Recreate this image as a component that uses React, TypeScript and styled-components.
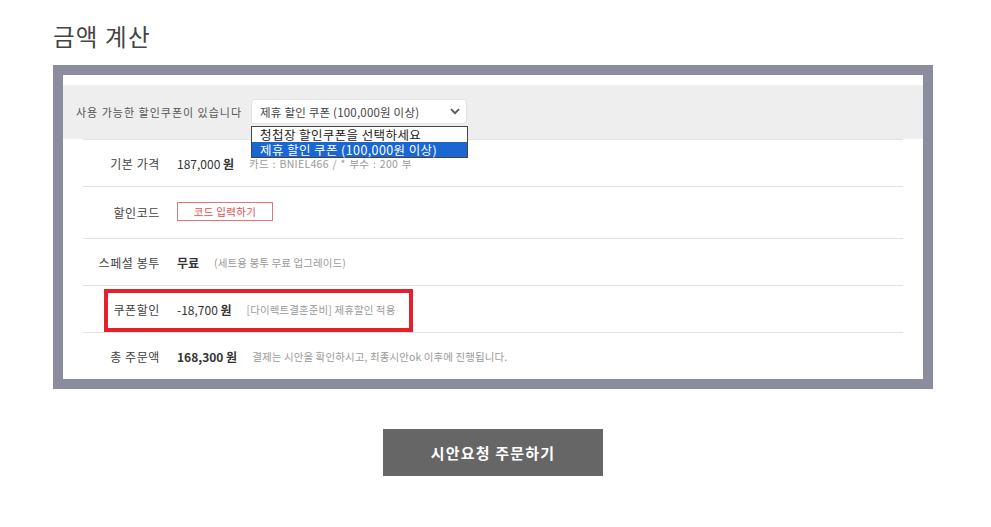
import React from "react";
import styled, { createGlobalStyle } from "styled-components";

const GlobalStyle = createGlobalStyle`
  body {
    margin: 0;
    background: #fff;
    font-family: "Noto Sans CJK KR", "Noto Sans", sans-serif;
    color: #333;
  }
`;

const Page = styled.div`
  width: 991px;
  padding-top: 21px;
`;

const Title = styled.h2`
  margin: 0 0 13px 53px;
  font-size: 23.5px;
  line-height: 31px;
  font-weight: 400;
  color: #444;
  letter-spacing: 1.2px;
`;

const Frame = styled.div`
  margin-left: 53px;
  width: 880px;
  box-sizing: border-box;
  border: 10px solid #8b8d9e;
  background: #fff;
  padding-top: 10px;
`;

const CouponBar = styled.div`
  position: relative;
  height: 54px;
  background: #eee;
  display: flex;
  align-items: center;
  padding-left: 13px;
  gap: 9px;
`;

const CouponLabel = styled.span`
  font-size: 11px;
  color: #555;
  letter-spacing: 1px;
`;

const SelectWrap = styled.div`
  position: relative;
`;

const SelectBox = styled.div`
  width: 216px;
  height: 25px;
  box-sizing: border-box;
  background: #fff;
  border: 1px solid #e2e2e2;
  border-radius: 3px;
  display: flex;
  align-items: center;
  justify-content: space-between;
  padding: 0 6px 0 8px;
  font-size: 11.5px;
  letter-spacing: 0.2px;
  color: #444;
  margin-top: -1px;
`;

const OptionList = styled.ul`
  position: absolute;
  left: 0;
  top: 26px;
  width: 217px;
  margin: 0;
  padding: 0;
  list-style: none;
  background: #fff;
  border: 1px solid #444;
  box-sizing: border-box;
  z-index: 3;
`;

const Option = styled.li<{ $active?: boolean }>`
  height: 15px;
  line-height: 15px;
  padding-left: 8px;
  font-size: 12.5px;
  color: ${(p) => (p.$active ? "#fff" : "#222")};
  background: ${(p) => (p.$active ? "#1a66d2" : "#fff")};
  letter-spacing: 0.4px;
  white-space: nowrap;
`;

const Rows = styled.div`
  margin: 0 20px;
`;

const Row = styled.div<{ $tall?: boolean }>`
  position: relative;
  height: ${(p) => (p.$tall ? 52 : 47)}px;
  box-sizing: border-box;
  border-top: 1px solid #e2e2e2;
  display: flex;
  align-items: center;
`;

const Label = styled.span`
  width: 77px;
  text-align: right;
  font-size: 12px;
  color: #444;
  letter-spacing: 0.6px;
  margin-right: 17px;
`;

const Value = styled.span<{ $bold?: boolean }>`
  font-size: 12px;
  color: #333;
  font-weight: ${(p) => (p.$bold ? 700 : 400)};
  margin-right: 15px;
  white-space: nowrap;
  b {
    font-weight: 700;
  }
`;

const Note = styled.span<{ $wide?: boolean }>`
  font-size: 10.5px;
  color: #9a9a9a;
  white-space: nowrap;
  word-spacing: ${(p) => (p.$wide ? 1 : 0)}px;
  letter-spacing: ${(p) => (p.$wide ? 0.3 : 0.1)}px;
`;

const CodeButton = styled.button`
  width: 96px;
  height: 19px;
  padding: 0;
  background: #fff;
  border: 1px solid #e07777;
  color: #e05050;
  font-family: inherit;
  font-size: 10.5px;
  letter-spacing: 0.3px;
  margin-top: -2px;
`;

const Highlight = styled.div`
  position: absolute;
  left: 21px;
  top: 3px;
  width: 309px;
  height: 43px;
  box-sizing: border-box;
  border: 4px solid #e3202b;
  pointer-events: none;
`;

const Actions = styled.div`
  display: flex;
  justify-content: center;
  padding: 40px 0 0 0;
  width: 986px;
`;

const OrderButton = styled.button`
  width: 220px;
  height: 47px;
  border: none;
  background: #666;
  color: #fff;
  font-family: inherit;
  font-size: 15px;
  font-weight: 700;
  letter-spacing: 1.2px;
`;

function Chevron() {
  return (
    <svg width="10" height="7" viewBox="0 0 10 7">
      <path d="M1 1.2 L5 5.2 L9 1.2" fill="none" stroke="#555" strokeWidth="1.8" />
    </svg>
  );
}

export default function App() {
  return (
    <Page>
      <GlobalStyle />
      <Title>금액 계산</Title>
      <Frame>
        <CouponBar>
          <CouponLabel>사용 가능한 할인쿠폰이 있습니다</CouponLabel>
          <SelectWrap>
            <SelectBox>
              <span>제휴 할인 쿠폰 (100,000원 이상)</span>
              <Chevron />
            </SelectBox>
            <OptionList>
              <Option>청첩장 할인쿠폰을 선택하세요</Option>
              <Option $active>제휴 할인 쿠폰 (100,000원 이상)</Option>
            </OptionList>
          </SelectWrap>
        </CouponBar>
        <Rows>
          <Row>
            <Label>기본 가격</Label>
            <Value>
              187,000 <b>원</b>
            </Value>
            <Note $wide>카드 : BNIEL466 / * 부수 : 200 부</Note>
          </Row>
          <Row $tall>
            <Label>할인코드</Label>
            <CodeButton>코드 입력하기</CodeButton>
          </Row>
          <Row>
            <Label>스페셜 봉투</Label>
            <Value $bold>무료</Value>
            <Note>(세트용 봉투 무료 업그레이드)</Note>
          </Row>
          <Row>
            <Label>쿠폰할인</Label>
            <Value>
              -18,700 <b>원</b>
            </Value>
            <Note>[다이렉트결혼준비] 제휴할인 적용</Note>
            <Highlight />
          </Row>
          <Row>
            <Label>총 주문액</Label>
            <Value $bold>168,300 원</Value>
            <Note>결제는 시안을 확인하시고, 최종시안ok 이후에 진행됩니다.</Note>
          </Row>
        </Rows>
      </Frame>
      <Actions>
        <OrderButton>시안요청 주문하기</OrderButton>
      </Actions>
    </Page>
  );
}
